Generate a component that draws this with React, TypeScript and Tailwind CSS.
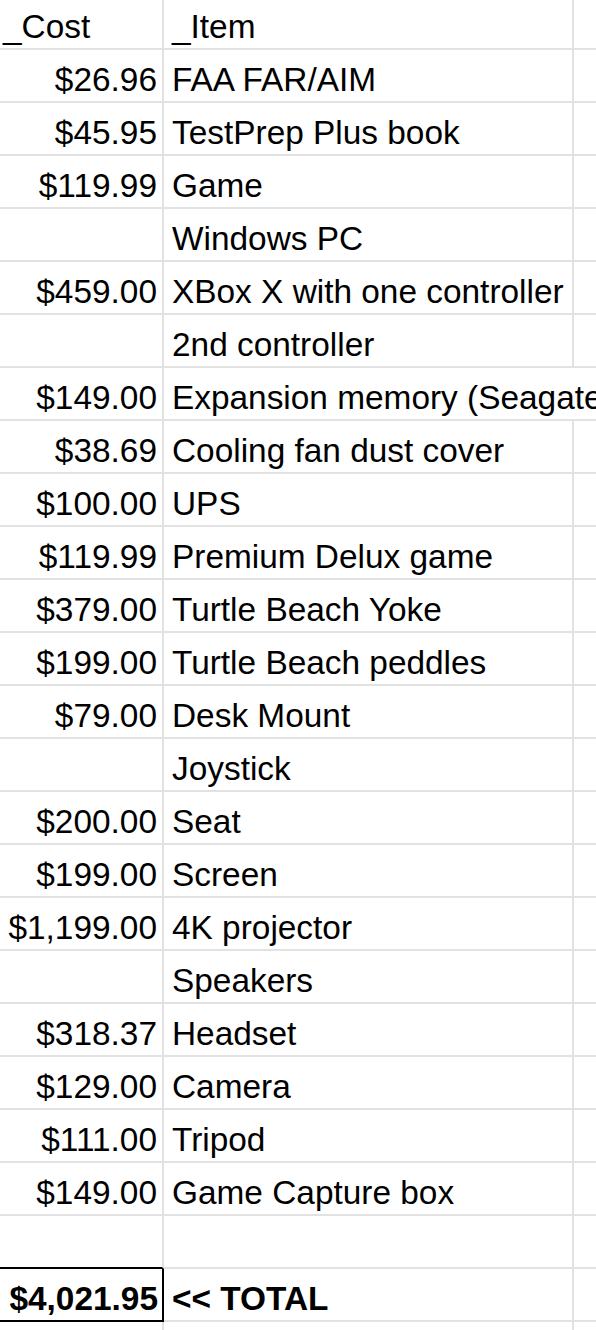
const rows: [string, string][] = [
  ['$26.96', 'FAA FAR/AIM'],
  ['$45.95', 'TestPrep Plus book'],
  ['$119.99', 'Game'],
  ['', 'Windows PC'],
  ['$459.00', 'XBox X with one controller'],
  ['', '2nd controller'],
  ['$149.00', 'Expansion memory (Seagate Storage Expansion Card)'],
  ['$38.69', 'Cooling fan dust cover'],
  ['$100.00', 'UPS'],
  ['$119.99', 'Premium Delux game'],
  ['$379.00', 'Turtle Beach Yoke'],
  ['$199.00', 'Turtle Beach peddles'],
  ['$79.00', 'Desk Mount'],
  ['', 'Joystick'],
  ['$200.00', 'Seat'],
  ['$199.00', 'Screen'],
  ['$1,199.00', '4K projector'],
  ['', 'Speakers'],
  ['$318.37', 'Headset'],
  ['$129.00', 'Camera'],
  ['$111.00', 'Tripod'],
  ['$149.00', 'Game Capture box'],
];

function Row({
  cost,
  item,
  header = false,
  overflow = false,
}: {
  cost: string;
  item: string;
  header?: boolean;
  overflow?: boolean;
}) {
  return (
    <div className={`flex ${header ? 'h-[50px]' : 'h-[53px]'} border-b-2 border-[#e2e2e2]`}>
      <div
        className={`w-[164px] shrink-0 flex items-end pb-[5px] pr-[5px] border-r-2 border-[#e2e2e2] ${
          header ? 'justify-start pl-[3px]' : 'justify-end'
        }`}
      >
        {cost}
      </div>
      <div
        className={`w-[410px] shrink-0 flex items-end pb-[5px] pl-[8px] whitespace-nowrap ${
          overflow ? 'overflow-visible' : 'border-r-2 border-[#e2e2e2]'
        }`}
      >
        {item}
      </div>
      <div className="flex-1" />
    </div>
  );
}

export default function App() {
  return (
    <div
      className="w-[596px] h-[1330px] overflow-hidden bg-white text-black text-[33.4px] leading-[33px]"
      style={{ fontFamily: '"Liberation Sans", Arial, sans-serif' }}
    >
      <Row cost="_Cost" item="_Item" header />
      {rows.map(([cost, item], i) => (
        <Row key={i} cost={cost} item={item} overflow={i === 6} />
      ))}

      {/* empty row, its first cell carries the top edge of the total box */}
      <div className="flex h-[53px]">
        <div className="w-[164px] shrink-0 border-b-2 border-r-2 border-b-black border-r-[#e2e2e2]" />
        <div className="w-[410px] shrink-0 border-b-2 border-r-2 border-[#e2e2e2]" />
        <div className="flex-1 border-b-2 border-[#e2e2e2]" />
      </div>

      {/* total */}
      <div className="flex h-[53px] font-bold">
        <div className="w-[164px] shrink-0 flex items-end justify-end pb-[5px] pr-[4px] border-b-2 border-r-2 border-black">
          $4,021.95
        </div>
        <div className="w-[410px] shrink-0 flex items-end pb-[5px] pl-[8px] border-b-2 border-r-2 border-[#e2e2e2]">
          &lt;&lt; TOTAL
        </div>
        <div className="flex-1 border-b-2 border-[#e2e2e2]" />
      </div>

      <div className="flex h-[53px]">
        <div className="w-[164px] shrink-0 border-r-2 border-[#e2e2e2]" />
        <div className="w-[410px] shrink-0 border-r-2 border-[#e2e2e2]" />
        <div className="flex-1" />
      </div>
    </div>
  );
}
